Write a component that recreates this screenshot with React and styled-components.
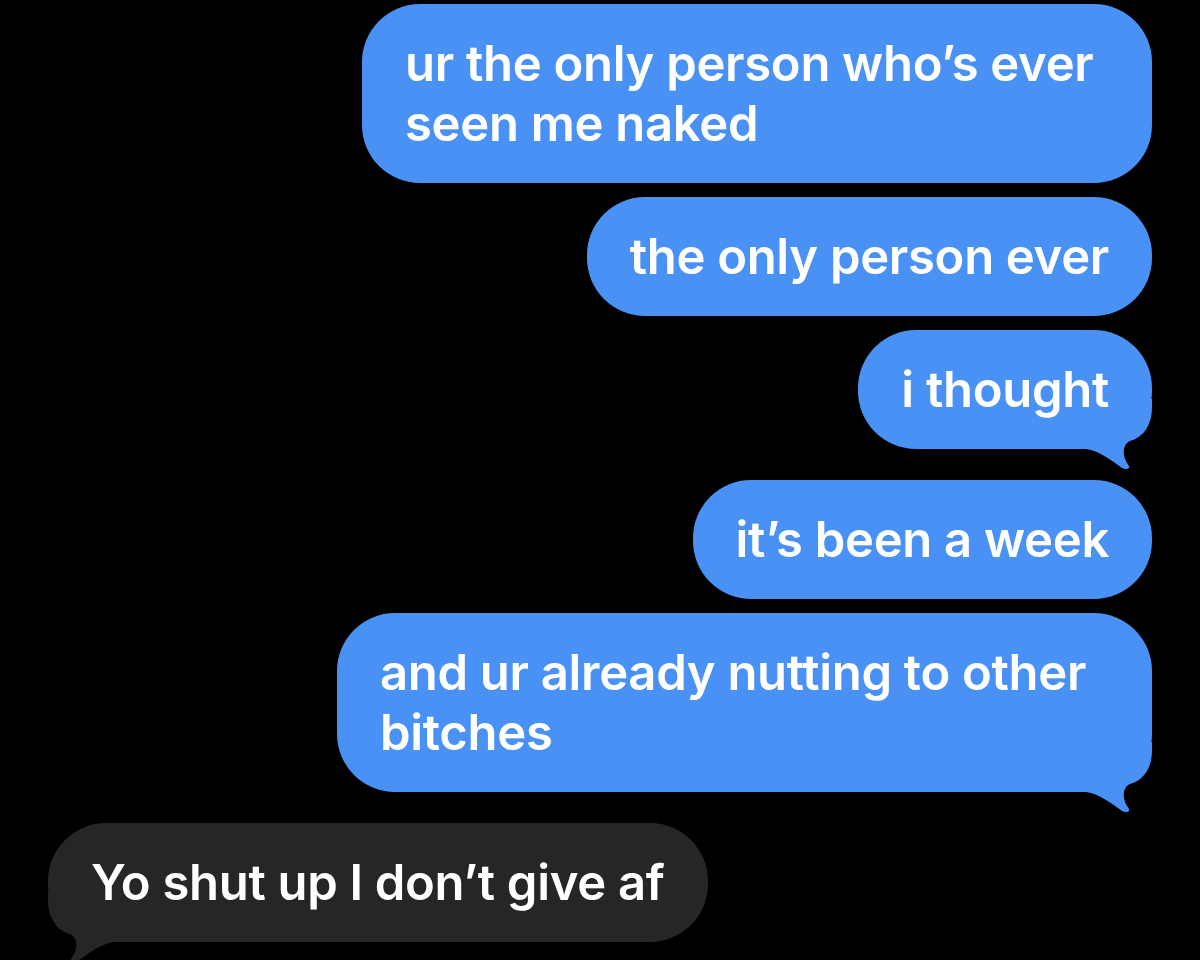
import React from "react";
import styled, { createGlobalStyle } from "styled-components";

const GlobalStyle = createGlobalStyle`
  html, body {
    margin: 0;
    padding: 0;
    background: #000;
  }
`;

const Thread = styled.div`
  box-sizing: border-box;
  width: 1200px;
  height: 960px;
  overflow: hidden;
  background: #000;
  padding: 4px 48px 0;
  display: flex;
  flex-direction: column;
`;

const Bubble = styled.div`
  position: relative;
  box-sizing: border-box;
  align-self: ${({ $mine }) => ($mine ? "flex-end" : "flex-start")};
  width: ${({ $width }) => ($width ? `${$width}px` : "auto")};
  background: ${({ $mine }) => ($mine ? "#4a91f5" : "#262629")};
  color: #fff;
  font-family: Inter, "Liberation Sans", Arial, sans-serif;
  font-size: 49px;
  font-weight: 600;
  letter-spacing: -0.3px;
  line-height: 60px;
  white-space: nowrap;
  padding: 29.5px 43px;
  border-radius: 58px;
  margin-bottom: ${({ $tail }) => ($tail ? "31px" : "14px")};
`;

const Text = styled.span`
  position: relative;
  z-index: 1;
`;

const Tail = styled.svg`
  position: absolute;
  bottom: -22px;
  ${({ $mine }) => ($mine ? "right: 0;" : "left: 0; transform: scaleX(-1);")}
  width: 70px;
  height: 72px;
  fill: ${({ $mine }) => ($mine ? "#4a91f5" : "#262629")};
`;

const messages = [
  { mine: true, width: 790, lines: ["ur the only person who\u2019s ever", "seen me naked"] },
  { mine: true, lines: ["the only person ever"] },
  { mine: true, lines: ["i thought"], tail: true },
  { mine: true, lines: ["it\u2019s been a week"] },
  { mine: true, width: 815, lines: ["and ur already nutting to other", "bitches"], tail: true },
  { mine: false, lines: ["Yo shut up I don\u2019t give af"], tail: true },
];

const App = () => {
  return (
    <>
      <GlobalStyle />
      <Thread>
        {messages.map((m, i) => (
          <Bubble key={i} $mine={m.mine} $tail={m.tail} $width={m.width}>
            <Text>
              {m.lines.map((line, j) => (
                <React.Fragment key={j}>
                  {j > 0 && <br />}
                  {line}
                </React.Fragment>
              ))}
            </Text>
            {m.tail && (
              <Tail $mine={m.mine} viewBox="0 0 70 72">
                <path d="M0 0 L70 0 L70 8 C70 26 62 38 48 42 C43 44 41 50 42 56 C43 62 46 65 47 67 C48 70 44 71 40 69 C30 62 18 52 4 50 L0 50 Z" />
              </Tail>
            )}
          </Bubble>
        ))}
      </Thread>
    </>
  );
};

export default App;
